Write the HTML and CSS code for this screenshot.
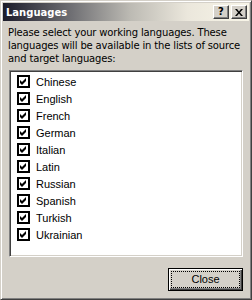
FILE: index.html
```html
<!DOCTYPE html>
<html lang="en">
<head>
    <meta charset="UTF-8">
    <title>Languages</title>
    <link rel="stylesheet" href="styles.css">
</head>
<body>

    <div class="window">
        <div class="titlebar">
            <span class="title">Languages</span>
            <div class="caption-buttons">
                <button class="cap-btn help">?</button>
                <button class="cap-btn close-x">
                    <svg width="8" height="7" viewBox="0 0 8 7">
                        <path d="M0 0h2l2 2.5 2-2.5h2l-3 3.5 3 3.5h-2l-2-2.5-2 2.5h-2l3-3.5z" fill="#000"/>
                    </svg>
                </button>
            </div>
        </div>

        <div class="content">
            <p class="intro">Please select your working languages. These languages will be available in the lists of source and target languages:</p>

            <ul class="listbox">
                <li class="item"><span class="check"><svg width="9" height="9" viewBox="0 0 9 9"><path d="M1 3l2 2 4-4v3l-4 4-2-2z" fill="#000"/></svg></span>Chinese</li>
                <li class="item"><span class="check"><svg width="9" height="9" viewBox="0 0 9 9"><path d="M1 3l2 2 4-4v3l-4 4-2-2z" fill="#000"/></svg></span>English</li>
                <li class="item"><span class="check"><svg width="9" height="9" viewBox="0 0 9 9"><path d="M1 3l2 2 4-4v3l-4 4-2-2z" fill="#000"/></svg></span>French</li>
                <li class="item"><span class="check"><svg width="9" height="9" viewBox="0 0 9 9"><path d="M1 3l2 2 4-4v3l-4 4-2-2z" fill="#000"/></svg></span>German</li>
                <li class="item"><span class="check"><svg width="9" height="9" viewBox="0 0 9 9"><path d="M1 3l2 2 4-4v3l-4 4-2-2z" fill="#000"/></svg></span>Italian</li>
                <li class="item"><span class="check"><svg width="9" height="9" viewBox="0 0 9 9"><path d="M1 3l2 2 4-4v3l-4 4-2-2z" fill="#000"/></svg></span>Latin</li>
                <li class="item"><span class="check"><svg width="9" height="9" viewBox="0 0 9 9"><path d="M1 3l2 2 4-4v3l-4 4-2-2z" fill="#000"/></svg></span>Russian</li>
                <li class="item"><span class="check"><svg width="9" height="9" viewBox="0 0 9 9"><path d="M1 3l2 2 4-4v3l-4 4-2-2z" fill="#000"/></svg></span>Spanish</li>
                <li class="item"><span class="check"><svg width="9" height="9" viewBox="0 0 9 9"><path d="M1 3l2 2 4-4v3l-4 4-2-2z" fill="#000"/></svg></span>Turkish</li>
                <li class="item"><span class="check"><svg width="9" height="9" viewBox="0 0 9 9"><path d="M1 3l2 2 4-4v3l-4 4-2-2z" fill="#000"/></svg></span>Ukrainian</li>
            </ul>

            <div class="footer">
                <button class="btn-default"><span class="focus">Close</span></button>
            </div>
        </div>
    </div>

</body>
</html>
```

FILE: styles.css
```css
body {
    margin: 0;
    padding: 0;
    background-color: #d4d0c8;
}

.window {
    width: 252px;
    height: 300px;
    box-sizing: border-box;
    background-color: #d4d0c8;
    border: 1px solid;
    border-color: #d4d0c8 #404040 #404040 #d4d0c8;
    box-shadow: inset 1px 1px 0 #fff, inset -1px -1px 0 #808080;
    padding: 2px;
    display: flex;
    flex-direction: column;
}

.titlebar {
    height: 18px;
    display: flex;
    align-items: center;
    justify-content: space-between;
    background: linear-gradient(to right, #1c1c2a 0%, #707074 28%, #bdbbb4 52%, #ebe7dc 75%, #f8f5e8 100%);
    padding: 0 2px 0 3px;
}

.title {
    font-family: "DejaVu Sans", sans-serif;
    font-weight: bold;
    font-size: 10px;
    color: #fff;
}

.caption-buttons {
    display: flex;
    gap: 2px;
}

.cap-btn {
    width: 16px;
    height: 14px;
    padding: 0;
    margin: 0;
    box-sizing: border-box;
    background-color: #d4d0c8;
    border: 1px solid;
    border-color: #fff #404040 #404040 #fff;
    box-shadow: inset -1px -1px 0 #808080;
    display: flex;
    align-items: center;
    justify-content: center;
    font-family: "DejaVu Sans", sans-serif;
    font-weight: bold;
    font-size: 10px;
    line-height: 1;
    color: #000;
}

.content {
    flex: 1;
    display: flex;
    flex-direction: column;
    padding: 5px 6px 6px 6px;
}

.intro {
    margin: 0 -6px 0 -1px;
    font-family: "DejaVu Sans", sans-serif;
    font-size: 10px;
    letter-spacing: -0.15px;
    line-height: 13px;
    color: #000;
}

.listbox {
    list-style: none;
    margin: 5px 0 0 0;
    padding: 2px 0 0 0;
    height: 187px;
    box-sizing: border-box;
    background: #fff;
    border: 1px solid;
    border-color: #808080 #fff #fff #808080;
    box-shadow: inset 1px 1px 0 #404040, inset -1px -1px 0 #d4d0c8;
}

.item {
    display: flex;
    align-items: center;
    height: 17px;
    padding-left: 7px;
    font-family: "Liberation Sans", Arial, sans-serif;
    font-size: 11px;
    color: #000;
}

.check {
    width: 13px;
    height: 13px;
    box-sizing: border-box;
    border: 2px solid #000;
    background: #fff;
    margin-right: 6px;
    display: flex;
}

.footer {
    display: flex;
    justify-content: flex-end;
    margin-top: auto;
}

.btn-default {
    width: 75px;
    height: 23px;
    padding: 2px;
    box-sizing: border-box;
    background-color: #d4d0c8;
    border: 1px solid #000;
    box-shadow: inset 1px 1px 0 #fff, inset -1px -1px 0 #404040, inset -2px -2px 0 #808080;
    font-family: "Liberation Sans", Arial, sans-serif;
    font-size: 11px;
    color: #000;
}

.focus {
    display: block;
    height: 100%;
    box-sizing: border-box;
    border: 1px dotted #000;
    line-height: 15px;
}
```
